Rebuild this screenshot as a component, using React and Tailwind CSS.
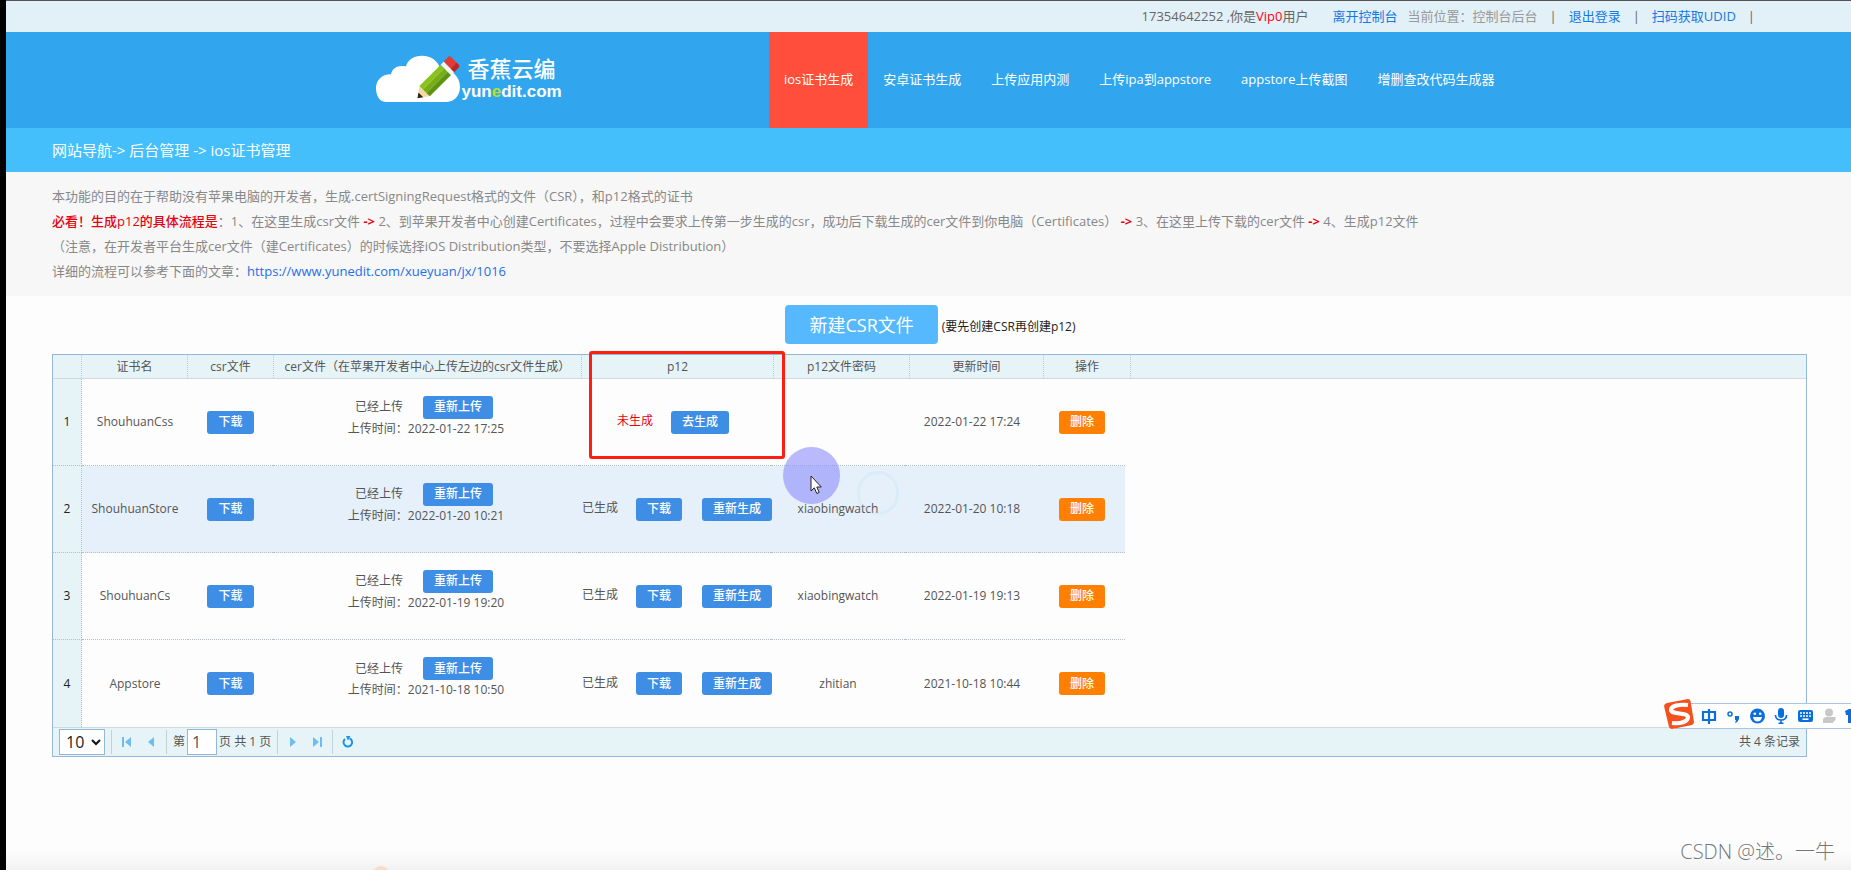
import React, { useState } from 'react';
import clsx from 'clsx';

const certificates = [
  { id: 1, name: 'ShouhuanCss', uploaded: '2022-01-22 17:25', generated: false, password: '', updated: '2022-01-22 17:24' },
  { id: 2, name: 'ShouhuanStore', uploaded: '2022-01-20 10:21', generated: true, password: 'xiaobingwatch', updated: '2022-01-20 10:18' },
  { id: 3, name: 'ShouhuanCs', uploaded: '2022-01-19 19:20', generated: true, password: 'xiaobingwatch', updated: '2022-01-19 19:13' },
  { id: 4, name: 'Appstore', uploaded: '2021-10-18 10:50', generated: true, password: 'zhitian', updated: '2021-10-18 10:44' },
];

const navItems = [
  'ios证书生成',
  '安卓证书生成',
  '上传应用内测',
  '上传ipa到appstore',
  'appstore上传截图',
  '增删查改代码生成器',
];

const Logo = () => (
  <a href="#home" className="flex items-center">
    <svg className="mb-1 h-[49px] w-[87px]" viewBox="44 40 260 146">
      <path
        fill="#fff"
        d="M76 183C56 183 47 163 47 141C47 117 66 99 92 100C96 82 112 72 136 77C143 56 161 45 184 45C212 45 232 60 239 84C272 84 298 106 298 138C298 164 282 183 258 183Z"
      />
      <g transform="translate(171 172) rotate(-45)">
        <path fill="#f3d9a4" d="M0 0L32 -22V22Z" />
        <path fill="#2c2620" d="M0 0L14 -10V10Z" />
        <path fill="#8cc21f" d="M30 -22H120V-7H30Z" />
        <path fill="#76ae16" d="M30 -7H120V8H30Z" />
        <path fill="#5c9310" d="M30 8H120V22H30Z" />
        <path fill="#f4f4f4" d="M120 -22H133V22H120Z" />
        <path fill="#e23a34" d="M133 -22H152Q158 -22 158 -16V16Q158 22 152 22H133Z" />
        <path fill="#b82a27" d="M133 8H158V16Q158 22 152 22H133Z" />
      </g>
    </svg>
    <span className="flex flex-col text-white">
      <span className="pl-1.5 text-[22px] leading-6 font-medium">香蕉云编</span>
      <span className="font-['Liberation_Sans',sans-serif] text-[17px] leading-6 font-bold">
        yun<span className="text-[#b6e02a]">e</span>dit.com
      </span>
    </span>
  </a>
);

const ActionButton = ({ children, color = 'blue' }) => (
  <button
    type="button"
    className={clsx(
      'h-[23px] rounded-[3px] px-[11px] text-xs leading-4 font-medium text-white',
      color === 'orange' ? 'bg-[#ff8000]' : 'bg-[#3f8ee6]'
    )}
  >
    {children}
  </button>
);

const Separator = () => <span className="mx-1 h-6 w-px bg-[#c4d2d8]" />;

const PagerButton = ({ label, children }) => (
  <button type="button" aria-label={label} className="flex h-6 w-[22px] items-center justify-center">
    <svg className="h-3 w-3" viewBox="0 0 12 12" fill="#6fbdf0">
      {children}
    </svg>
  </button>
);

const Pager = () => {
  const [pageSize, setPageSize] = useState('10');
  const [page, setPage] = useState('1');

  return (
    <div className="flex h-[29px] items-center border-t border-[#cfdadd] bg-[#e7f4f7] px-1.5">
      <div className="relative mr-0.5">
        <select
          aria-label="每页条数"
          value={pageSize}
          onChange={(e) => setPageSize(e.target.value)}
          className="h-[26px] w-[46px] appearance-none border border-[#95b8d8] bg-white pl-1.5 text-base leading-6 text-[#222]"
        >
          <option>10</option>
          <option>20</option>
          <option>50</option>
        </select>
        <svg className="pointer-events-none absolute top-2 right-1 h-2.5 w-2.5" viewBox="0 0 10 10">
          <path d="M1 3L5 7L9 3" fill="none" stroke="#111" strokeWidth="2" />
        </svg>
      </div>
      <Separator />
      <div className="flex gap-0.5">
        <PagerButton label="第一页">
          <path d="M1 1H3V11H1ZM10 1V11L4 6Z" />
        </PagerButton>
        <PagerButton label="上一页">
          <path d="M9 1V11L3 6Z" />
        </PagerButton>
      </div>
      <Separator />
      <label className="flex items-center pl-0.5">
        第
        <input
          value={page}
          onChange={(e) => setPage(e.target.value)}
          className="mx-0.5 h-[26px] w-[30px] border border-[#95b8d8] bg-white pl-1 text-base text-[#555]"
        />
      </label>
      <span className="pr-0.5">页 共 1 页</span>
      <Separator />
      <div className="flex gap-0.5">
        <PagerButton label="下一页">
          <path d="M3 1V11L9 6Z" />
        </PagerButton>
        <PagerButton label="最后一页">
          <path d="M2 1V11L8 6ZM9 1H11V11H9Z" />
        </PagerButton>
      </div>
      <Separator />
      <PagerButton label="刷新">
        <path d="M7.5 2.3A4.3 4.3 0 1 1 3 3" fill="none" stroke="#1c93dc" strokeWidth="2" />
        <path d="M4 0H8.5L6 4.5Z" fill="#1c93dc" />
      </PagerButton>
      <span className="ml-auto">共 4 条记录</span>
    </div>
  );
};

const headCell = 'border-r border-dotted border-[#b9cdd4] p-0 font-normal';

const CertificateGrid = () => (
  <section className="relative mr-11 ml-[46px] border border-[#95b8d8] text-xs text-[#555]">
    {/* Header */}
    <div className="border-b border-[#cfdadd] bg-[#e7f4f7]">
      <table className="w-[1078px] table-fixed border-separate border-spacing-0 text-center">
        <thead>
          <tr className="h-[23px] leading-5">
            <th className={clsx(headCell, 'w-[29px]')} aria-label="序号" />
            <th className={clsx(headCell, 'w-[106px]')}>证书名</th>
            <th className={clsx(headCell, 'w-[86px]')}>csr文件</th>
            <th className={clsx(headCell, 'w-[308px] whitespace-nowrap')}>cer文件（在苹果开发者中心上传左边的csr文件生成）</th>
            <th className={clsx(headCell, 'w-[192px]')}>p12</th>
            <th className={clsx(headCell, 'w-[136px]')}>p12文件密码</th>
            <th className={clsx(headCell, 'w-[134px]')}>更新时间</th>
            <th className={clsx(headCell, 'w-[87px]')}>操作</th>
          </tr>
        </thead>
      </table>
    </div>

    {/* Rows */}
    <table className="w-[1072px] table-fixed border-separate border-spacing-0 text-center whitespace-nowrap">
      <colgroup>
        <col className="w-[29px]" />
        <col className="w-[106px]" />
        <col className="w-[85px]" />
        <col className="w-[306px]" />
        <col className="w-[192px]" />
        <col className="w-[134px]" />
        <col className="w-[134px]" />
        <col className="w-[86px]" />
      </colgroup>
      <tbody>
        {certificates.map((cert) => (
          <tr
            key={cert.id}
            className={clsx(
              'h-[87px] *:border-b *:border-dotted *:border-[#b5bfc4] *:p-0 last:*:border-b-0',
              cert.id === 2 && 'bg-[#e6f0fa]'
            )}
          >
            <td className="border-r bg-[#e7f4f7] text-[#222]">{cert.id}</td>
            <td>{cert.name}</td>
            <td><ActionButton>下载</ActionButton></td>
            <td>
              <div className="flex items-center justify-center gap-5 pr-1">
                <span>已经上传</span>
                <ActionButton>重新上传</ActionButton>
              </div>
              <div className="pb-2.5 leading-5">上传时间：{cert.uploaded}</div>
            </td>
            <td>
              {cert.generated ? (
                <div className="flex items-center justify-center pl-1">
                  <span className="pb-0.5">已生成</span>
                  <span className="flex gap-5 pl-[18px]">
                    <ActionButton>下载</ActionButton>
                    <ActionButton>重新生成</ActionButton>
                  </span>
                </div>
              ) : (
                <div className="flex items-center justify-center pr-1">
                  <span className="pb-0.5 text-[#e60012]">未生成</span>
                  <span className="flex pl-[18px]">
                    <ActionButton>去生成</ActionButton>
                  </span>
                </div>
              )}
            </td>
            <td>{cert.password}</td>
            <td>{cert.updated}</td>
            <td><ActionButton color="orange">删除</ActionButton></td>
          </tr>
        ))}
      </tbody>
    </table>
    <Pager />

    {/* Highlight and pointer */}
    <div className="pointer-events-none absolute -top-1 left-[536px] h-[108px] w-[196px] rounded-[3px] border-3 border-[#ff1f12]" />
    <div className="pointer-events-none absolute top-[116px] left-[804px] h-11 w-[42px] rounded-full border-3 border-[#a8dcea]/20" />
    <div className="pointer-events-none absolute top-[92px] left-[730px] h-[57px] w-[57px] rounded-full bg-[#8c8cfa]/60" />
    <svg className="pointer-events-none absolute top-[120px] left-[757px] h-5 w-3" viewBox="0 0 12 20">
      <path d="M1 1V16L4.3 12.8L6.8 18.5L9.2 17.4L6.8 12H11.3Z" fill="#fff" stroke="#222" />
    </svg>
  </section>
);

const InputMethodBar = () => (
  <div className="absolute top-[703px] right-0 flex h-[26px] w-[176px] items-center border-y border-[#a9c5e6] bg-white">
    <svg className="absolute -top-1.5 -left-3 h-8 w-8" viewBox="0 0 32 32">
      <path d="M4 5L25 1Q27 1 27.5 3L31 24Q31 26 29 27L9 31Q7 31 6 29L1 8Q1 6 4 5Z" fill="#f4511c" />
      <path d="M25 7C16 6 8 8 8 12C9 17 24 14 25 19C25 24 17 26 9 25" fill="none" stroke="#fff" strokeWidth="4.2" />
    </svg>
    <svg className="ml-[18px] h-6 w-[158px]" viewBox="0 0 158 24" fill="#0a6fdc">
      {/* language mark */}
      <path d="M10 8H22V16H10Z M16 5V20" fill="none" stroke="#0a6fdc" strokeWidth="2.2" />
      {/* punctuation */}
      <circle cx="37" cy="10" r="2" fill="none" stroke="#0a6fdc" strokeWidth="1.5" />
      <path d="M42 12H46V15Q45 18 42 19L43 16H42Z" />
      {/* emoji */}
      <circle cx="64.5" cy="12" r="7.5" />
      <circle cx="61.8" cy="9.8" r="1.3" fill="#fff" />
      <circle cx="67.2" cy="9.8" r="1.3" fill="#fff" />
      <path d="M60 13H69Q68 17.5 64.5 17.5Q61 17.5 60 13Z" fill="#fff" />
      {/* microphone */}
      <rect x="85" y="4" width="6" height="10" rx="3" />
      <path d="M82.5 11Q82.5 16 88 16Q93.5 16 93.5 11M88 16V20" fill="none" stroke="#0a6fdc" strokeWidth="1.6" />
      <path d="M85.5 18.5H90.5V20H85.5Z" />
      {/* keyboard */}
      <rect x="105" y="6" width="15" height="12" rx="2" />
      <path d="M107 9H118M107 12H118" stroke="#fff" strokeWidth="1.6" strokeDasharray="2 1" />
      <path d="M109.5 15.2H115.5" stroke="#fff" strokeWidth="1.6" />
      {/* account */}
      <g fill="#c8c8c8">
        <circle cx="136" cy="8.5" r="4" />
        <path d="M130 19V16Q130 13 133.5 13H142.5V16L139.5 19Z" />
      </g>
      {/* skin */}
      <path d="M152 7L156 5H158V19H155V11H153Z" />
    </svg>
  </div>
);

const Arrow = () => <b className="text-[#e60012]">-&gt;</b>;

const App = () => (
  <div className="relative min-h-screen overflow-hidden border-l-6 border-black bg-[#fdfdfd] font-['Open_Sans','Noto_Sans_CJK_SC',sans-serif] text-[13px] text-[#666]">
    {/* Account bar */}
    <div className="flex h-8 items-center justify-end border-t border-[#555] bg-[#e2f0f7] pr-24 pb-0.5 leading-5">
      <span>17354642252 ,你是<span className="text-[#ff0016]">Vip0</span>用户</span>
      <a href="#leave" className="pl-6 text-[#1478e6]">离开控制台</a>
      <span className="pl-2.5 text-[#999]">当前位置：控制台后台</span>
      <span className="px-3">|</span>
      <a href="#logout" className="text-[#1478e6]">退出登录</a>
      <span className="px-3">|</span>
      <a href="#udid" className="text-[#1478e6]">扫码获取UDID</a>
      <span className="pl-3">|</span>
    </div>

    {/* Header */}
    <header className="bg-[#31a6ee]">
      <div className="mx-auto flex h-24 max-w-[1170px] items-center justify-between pr-1 pl-[31px]">
        <Logo />
        <nav className="flex h-full">
          {navItems.map((item, index) => (
            <a
              key={item}
              href="#nav"
              className={clsx(
                'flex items-center px-[15px] whitespace-nowrap text-white',
                index === 0 && 'bg-[#ff4e3c]'
              )}
            >
              {item}
            </a>
          ))}
        </nav>
      </div>
    </header>

    {/* Breadcrumb */}
    <div className="flex h-11 items-center bg-[#45bffb] pl-[46px] text-[15px] text-white">
      网站导航-&gt; 后台管理 -&gt; ios证书管理
    </div>

    {/* Instructions */}
    <div className="bg-[#f7f7f7] pt-3 pb-3 pl-[46px] leading-[25px] text-[#888]">
      <p>本功能的目的在于帮助没有苹果电脑的开发者，生成.certSigningRequest格式的文件（CSR），和p12格式的证书</p>
      <p>
        <span className="font-medium text-[#e60012]">必看！生成p12的具体流程是</span>：1、在这里生成csr文件 <Arrow /> 2、到苹果开发者中心创建Certificates，过程中会要求上传第一步生成的csr，成功后下载生成的cer文件到你电脑（Certificates） <Arrow /> 3、在这里上传下载的cer文件 <Arrow /> 4、生成p12文件
      </p>
      <p>（注意，在开发者平台生成cer文件（建Certificates）的时候选择iOS Distribution类型，不要选择Apple Distribution）</p>
      <p>
        详细的流程可以参考下面的文章：
        <a href="https://www.yunedit.com/xueyuan/jx/1016" className="text-[#1f6fe8]">https://www.yunedit.com/xueyuan/jx/1016</a>
      </p>
    </div>

    {/* Create */}
    <div className="flex items-center justify-center gap-1 pt-[9px] pb-2.5 pl-1">
      <button type="button" className="h-[39px] rounded bg-[#56b9fd] px-6 text-lg text-white">
        新建CSR文件
      </button>
      <span className="pt-1 text-xs text-[#222]">(要先创建CSR再创建p12)</span>
    </div>

    <CertificateGrid />

    {/* Page foot */}
    <div className="absolute inset-x-0 bottom-0 h-5 bg-linear-to-b from-[#fdfdfd] to-[#f2f2f2]" />
    <div className="absolute -bottom-3.5 left-[366px] h-[18px] w-[18px] rounded-full bg-[#fbdccb]" />
    <div className="absolute right-4 bottom-1.5 text-xl leading-6 font-light text-[#777]">CSDN @述。一牛</div>
    <InputMethodBar />
  </div>
);

export default App;
